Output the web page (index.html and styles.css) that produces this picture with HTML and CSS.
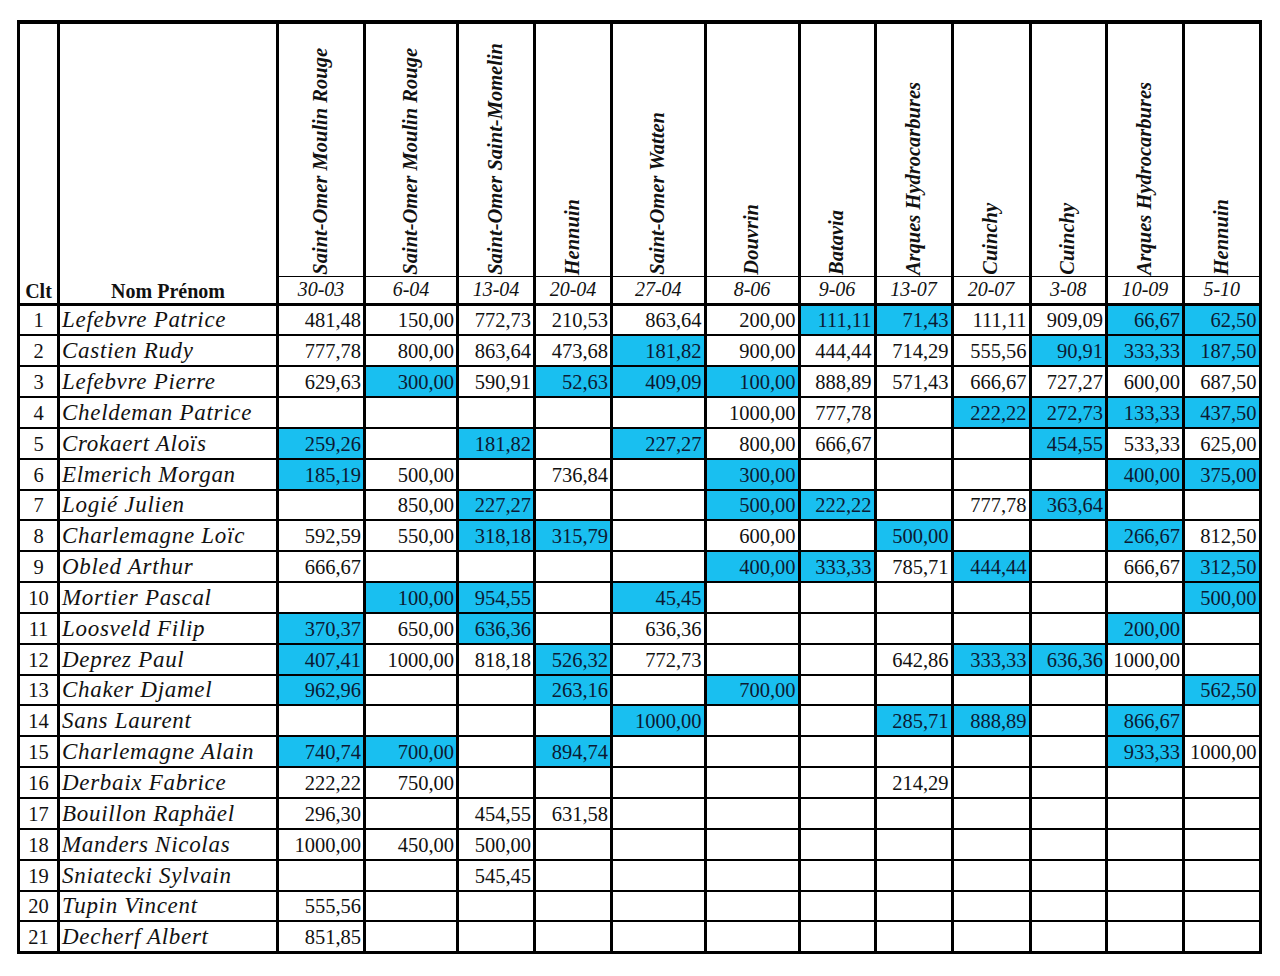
FILE: index.html
```html
<!DOCTYPE html>
<html lang="fr">
<head>
<meta charset="utf-8">
<title>Classement</title>
<link rel="stylesheet" href="styles.css">
</head>
<body>
<div class="page">
<table class="sheet">
<colgroup>
<col class="w40"><col class="w219"><col class="w87"><col class="w93"><col class="w77"><col class="w77"><col class="w935"><col class="w94"><col class="w76"><col class="w77"><col class="w78"><col class="w765"><col class="w77"><col class="w765">
</colgroup>
<thead>
<tr class="r-top">
<th rowspan="2" class="h-clt">Clt</th>
<th rowspan="2" class="h-name">Nom Prénom</th>
<th class="h-rot"><span>Saint-Omer Moulin Rouge</span></th>
<th class="h-rot"><span>Saint-Omer Moulin Rouge</span></th>
<th class="h-rot"><span>Saint-Omer Saint-Momelin</span></th>
<th class="h-rot"><span>Hennuin</span></th>
<th class="h-rot"><span>Saint-Omer Watten</span></th>
<th class="h-rot"><span>Douvrin</span></th>
<th class="h-rot"><span>Batavia</span></th>
<th class="h-rot"><span>Arques Hydrocarbures</span></th>
<th class="h-rot"><span>Cuinchy</span></th>
<th class="h-rot"><span>Cuinchy</span></th>
<th class="h-rot"><span>Arques Hydrocarbures</span></th>
<th class="h-rot"><span>Hennuin</span></th>
</tr>
<tr class="r-dates">
<th class="h-date">30-03</th><th class="h-date">6-04</th><th class="h-date">13-04</th><th class="h-date">20-04</th><th class="h-date">27-04</th><th class="h-date">8-06</th><th class="h-date">9-06</th><th class="h-date">13-07</th><th class="h-date">20-07</th><th class="h-date">3-08</th><th class="h-date">10-09</th><th class="h-date">5-10</th>
</tr>
</thead>
<tbody>
<tr><td class="clt">1</td><td class="name">Lefebvre Patrice</td><td class="num">481,48</td><td class="num">150,00</td><td class="num">772,73</td><td class="num">210,53</td><td class="num">863,64</td><td class="num">200,00</td><td class="num hl">111,11</td><td class="num hl">71,43</td><td class="num">111,11</td><td class="num">909,09</td><td class="num hl">66,67</td><td class="num hl">62,50</td></tr>
<tr><td class="clt">2</td><td class="name">Castien Rudy</td><td class="num">777,78</td><td class="num">800,00</td><td class="num">863,64</td><td class="num">473,68</td><td class="num hl">181,82</td><td class="num">900,00</td><td class="num">444,44</td><td class="num">714,29</td><td class="num">555,56</td><td class="num hl">90,91</td><td class="num hl">333,33</td><td class="num hl">187,50</td></tr>
<tr><td class="clt">3</td><td class="name">Lefebvre Pierre</td><td class="num">629,63</td><td class="num hl">300,00</td><td class="num">590,91</td><td class="num hl">52,63</td><td class="num hl">409,09</td><td class="num hl">100,00</td><td class="num">888,89</td><td class="num">571,43</td><td class="num">666,67</td><td class="num">727,27</td><td class="num">600,00</td><td class="num">687,50</td></tr>
<tr><td class="clt">4</td><td class="name">Cheldeman Patrice</td><td class="num"></td><td class="num"></td><td class="num"></td><td class="num"></td><td class="num"></td><td class="num">1000,00</td><td class="num">777,78</td><td class="num"></td><td class="num hl">222,22</td><td class="num hl">272,73</td><td class="num hl">133,33</td><td class="num hl">437,50</td></tr>
<tr><td class="clt">5</td><td class="name">Crokaert Aloïs</td><td class="num hl">259,26</td><td class="num"></td><td class="num hl">181,82</td><td class="num"></td><td class="num hl">227,27</td><td class="num">800,00</td><td class="num">666,67</td><td class="num"></td><td class="num"></td><td class="num hl">454,55</td><td class="num">533,33</td><td class="num">625,00</td></tr>
<tr><td class="clt">6</td><td class="name">Elmerich Morgan</td><td class="num hl">185,19</td><td class="num">500,00</td><td class="num"></td><td class="num">736,84</td><td class="num"></td><td class="num hl">300,00</td><td class="num"></td><td class="num"></td><td class="num"></td><td class="num"></td><td class="num hl">400,00</td><td class="num hl">375,00</td></tr>
<tr><td class="clt">7</td><td class="name">Logié Julien</td><td class="num"></td><td class="num">850,00</td><td class="num hl">227,27</td><td class="num"></td><td class="num"></td><td class="num hl">500,00</td><td class="num hl">222,22</td><td class="num"></td><td class="num">777,78</td><td class="num hl">363,64</td><td class="num"></td><td class="num"></td></tr>
<tr><td class="clt">8</td><td class="name">Charlemagne Loïc</td><td class="num">592,59</td><td class="num">550,00</td><td class="num hl">318,18</td><td class="num hl">315,79</td><td class="num"></td><td class="num">600,00</td><td class="num"></td><td class="num hl">500,00</td><td class="num"></td><td class="num"></td><td class="num hl">266,67</td><td class="num">812,50</td></tr>
<tr><td class="clt">9</td><td class="name">Obled Arthur</td><td class="num">666,67</td><td class="num"></td><td class="num"></td><td class="num"></td><td class="num"></td><td class="num hl">400,00</td><td class="num hl">333,33</td><td class="num">785,71</td><td class="num hl">444,44</td><td class="num"></td><td class="num">666,67</td><td class="num hl">312,50</td></tr>
<tr><td class="clt">10</td><td class="name">Mortier Pascal</td><td class="num"></td><td class="num hl">100,00</td><td class="num hl">954,55</td><td class="num"></td><td class="num hl">45,45</td><td class="num"></td><td class="num"></td><td class="num"></td><td class="num"></td><td class="num"></td><td class="num"></td><td class="num hl">500,00</td></tr>
<tr><td class="clt">11</td><td class="name">Loosveld Filip</td><td class="num hl">370,37</td><td class="num">650,00</td><td class="num hl">636,36</td><td class="num"></td><td class="num">636,36</td><td class="num"></td><td class="num"></td><td class="num"></td><td class="num"></td><td class="num"></td><td class="num hl">200,00</td><td class="num"></td></tr>
<tr><td class="clt">12</td><td class="name">Deprez Paul</td><td class="num hl">407,41</td><td class="num">1000,00</td><td class="num">818,18</td><td class="num hl">526,32</td><td class="num">772,73</td><td class="num"></td><td class="num"></td><td class="num">642,86</td><td class="num hl">333,33</td><td class="num hl">636,36</td><td class="num">1000,00</td><td class="num"></td></tr>
<tr><td class="clt">13</td><td class="name">Chaker Djamel</td><td class="num hl">962,96</td><td class="num"></td><td class="num"></td><td class="num hl">263,16</td><td class="num"></td><td class="num hl">700,00</td><td class="num"></td><td class="num"></td><td class="num"></td><td class="num"></td><td class="num"></td><td class="num hl">562,50</td></tr>
<tr><td class="clt">14</td><td class="name">Sans Laurent</td><td class="num"></td><td class="num"></td><td class="num"></td><td class="num"></td><td class="num hl">1000,00</td><td class="num"></td><td class="num"></td><td class="num hl">285,71</td><td class="num hl">888,89</td><td class="num"></td><td class="num hl">866,67</td><td class="num"></td></tr>
<tr><td class="clt">15</td><td class="name">Charlemagne Alain</td><td class="num hl">740,74</td><td class="num hl">700,00</td><td class="num"></td><td class="num hl">894,74</td><td class="num"></td><td class="num"></td><td class="num"></td><td class="num"></td><td class="num"></td><td class="num"></td><td class="num hl">933,33</td><td class="num">1000,00</td></tr>
<tr><td class="clt">16</td><td class="name">Derbaix Fabrice</td><td class="num">222,22</td><td class="num">750,00</td><td class="num"></td><td class="num"></td><td class="num"></td><td class="num"></td><td class="num"></td><td class="num">214,29</td><td class="num"></td><td class="num"></td><td class="num"></td><td class="num"></td></tr>
<tr><td class="clt">17</td><td class="name">Bouillon Raphäel</td><td class="num">296,30</td><td class="num"></td><td class="num">454,55</td><td class="num">631,58</td><td class="num"></td><td class="num"></td><td class="num"></td><td class="num"></td><td class="num"></td><td class="num"></td><td class="num"></td><td class="num"></td></tr>
<tr><td class="clt">18</td><td class="name">Manders Nicolas</td><td class="num">1000,00</td><td class="num">450,00</td><td class="num">500,00</td><td class="num"></td><td class="num"></td><td class="num"></td><td class="num"></td><td class="num"></td><td class="num"></td><td class="num"></td><td class="num"></td><td class="num"></td></tr>
<tr><td class="clt">19</td><td class="name">Sniatecki Sylvain</td><td class="num"></td><td class="num"></td><td class="num">545,45</td><td class="num"></td><td class="num"></td><td class="num"></td><td class="num"></td><td class="num"></td><td class="num"></td><td class="num"></td><td class="num"></td><td class="num"></td></tr>
<tr><td class="clt">20</td><td class="name">Tupin Vincent</td><td class="num">555,56</td><td class="num"></td><td class="num"></td><td class="num"></td><td class="num"></td><td class="num"></td><td class="num"></td><td class="num"></td><td class="num"></td><td class="num"></td><td class="num"></td><td class="num"></td></tr>
<tr><td class="clt">21</td><td class="name">Decherf Albert</td><td class="num">851,85</td><td class="num"></td><td class="num"></td><td class="num"></td><td class="num"></td><td class="num"></td><td class="num"></td><td class="num"></td><td class="num"></td><td class="num"></td><td class="num"></td><td class="num"></td></tr>
</tbody>
</table>
</div>
</body>
</html>
```
FILE: styles.css
```css
html, body {
  margin: 0;
  padding: 0;
  background: #ffffff;
}

.page {
  padding: 20px 0 0 17px;
}

.sheet {
  border-collapse: collapse;
  table-layout: fixed;
  width: 1244.5px;
  border: 3px solid #000;
  border-top-width: 4px;
  font-family: "Liberation Serif", "Times New Roman", serif;
  color: #111;
}

.w40 { width: 40px; }
.w219 { width: 219px; }
.w87 { width: 87px; }
.w93 { width: 93px; }
.w77 { width: 77px; }
.w935 { width: 93.5px; }
.w94 { width: 94px; }
.w76 { width: 76px; }
.w78 { width: 78px; }
.w765 { width: 76.5px; }

.sheet th,
.sheet td {
  border-left: 3px solid #000;
  border-right: 3px solid #000;
  padding: 0;
  line-height: normal;
}

.sheet td {
  border-top: 2px solid #000;
  border-bottom: 2px solid #000;
  vertical-align: bottom;
  white-space: nowrap;
}

.r-top { height: 254.5px; }
.r-dates { height: 28px; }
.sheet tbody tr { height: 30.85px; }

.sheet .h-clt,
.sheet .h-name {
  vertical-align: bottom;
  text-align: center;
  font-weight: bold;
  font-size: 20px;
  padding-bottom: 0;
  border-bottom: 3px solid #000;
}

.sheet .h-rot {
  vertical-align: bottom;
  text-align: center;
  padding-bottom: 1px;
  line-height: 0;
  border-bottom: 1px solid #000;
}

.h-rot span {
  display: inline-block;
  vertical-align: bottom;
  writing-mode: vertical-rl;
  transform: rotate(180deg);
  white-space: nowrap;
  font-style: italic;
  font-weight: bold;
  font-size: 20.5px;
  line-height: 1.15;
}

.sheet .h-date {
  vertical-align: bottom;
  text-align: center;
  font-style: italic;
  font-weight: normal;
  font-size: 20px;
  padding-bottom: 2px;
  border-bottom: 3px solid #000;
}

.sheet .clt {
  text-align: center;
  font-size: 20.5px;
  padding-bottom: 2px;
}

.sheet .name {
  text-align: left;
  font-style: italic;
  font-size: 23px;
  letter-spacing: 0.7px;
  padding: 0 0 1px 2px;
}

.sheet .num {
  text-align: right;
  font-size: 20.5px;
  padding: 0 2px 2px 0;
}

.hl {
  background: #19bff0;
  color: #0c1a33;
}
```
